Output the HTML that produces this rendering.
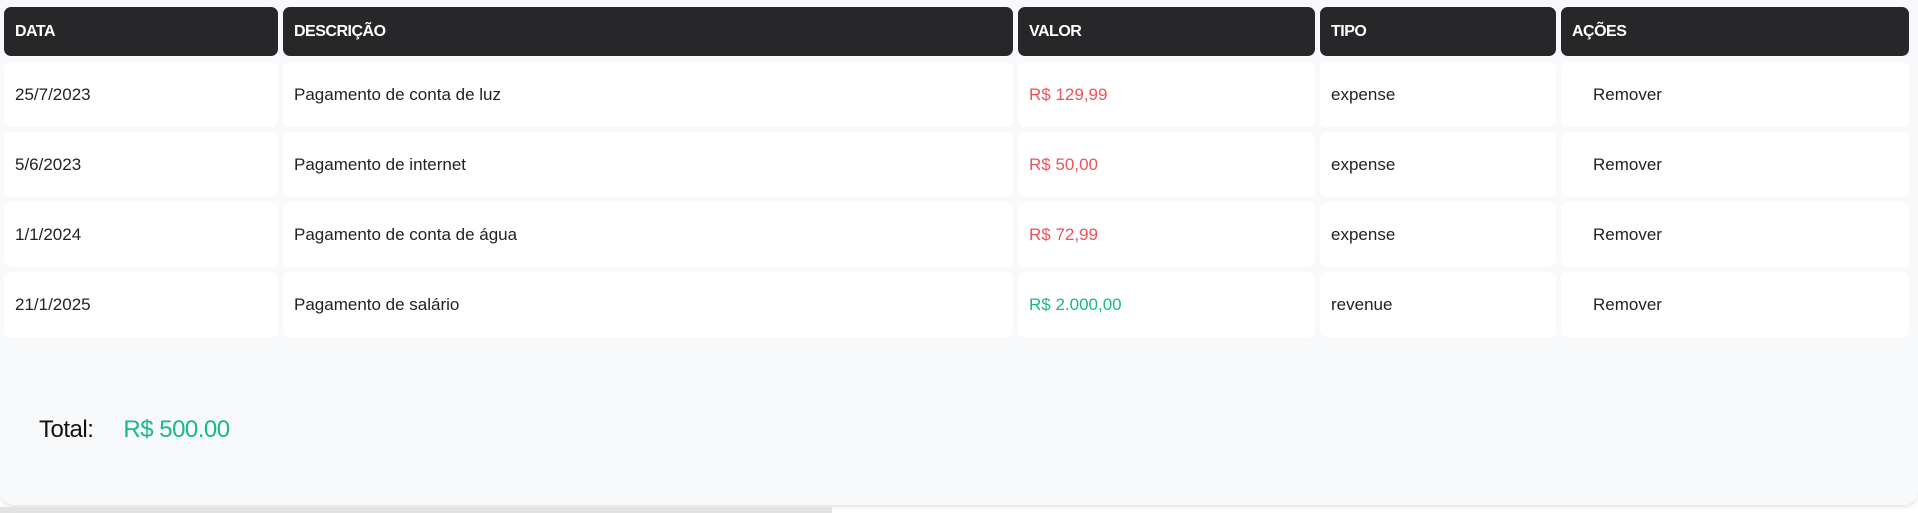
<!DOCTYPE html>
<html><head><meta charset="utf-8"><style>
*{margin:0;padding:0;box-sizing:border-box}
body{width:1918px;height:513px;background:#fff;font-family:"Liberation Sans",sans-serif;position:relative;overflow:hidden}
.wrap{position:absolute;left:0;top:0;width:1918px;height:505px;background:#f8f9fb;border-radius:0 0 14px 14px;box-shadow:0 2px 4px rgba(0,0,0,0.12)}
.c{position:absolute;border-radius:7px;background:#fff;font-size:17px;color:#222;padding-left:11px;display:flex;align-items:center}
.h{background:#27272a;color:#fff;font-weight:bold;font-size:16px;letter-spacing:-0.5px;height:49px;top:7px}
.r{color:#f0515a}.g{color:#19b889}
.tot{position:absolute;left:39px;top:416px;font-size:24px;color:#111;letter-spacing:-0.5px}
.tot span{color:#19b889;margin-left:30px}
.sb{position:absolute;left:0;top:507px;width:832px;height:6px;background:#e2e2e2}
</style></head><body>
<div class="wrap">
<div class="c h" style="left:4px;width:274px">DATA</div>
<div class="c h" style="left:283px;width:730px">DESCRIÇÃO</div>
<div class="c h" style="left:1018px;width:297px">VALOR</div>
<div class="c h" style="left:1320px;width:236px">TIPO</div>
<div class="c h" style="left:1561px;width:348px">AÇÕES</div>

<div class="c" style="left:4px;top:62px;width:274px;height:65px">25/7/2023</div>
<div class="c" style="left:283px;top:62px;width:730px;height:65px">Pagamento de conta de luz</div>
<div class="c r" style="left:1018px;top:62px;width:297px;height:65px">R$ 129,99</div>
<div class="c" style="left:1320px;top:62px;width:236px;height:65px">expense</div>
<div class="c" style="left:1561px;top:62px;width:348px;height:65px;padding-left:32px">Remover</div>

<div class="c" style="left:4px;top:132px;width:274px;height:65px">5/6/2023</div>
<div class="c" style="left:283px;top:132px;width:730px;height:65px">Pagamento de internet</div>
<div class="c r" style="left:1018px;top:132px;width:297px;height:65px">R$ 50,00</div>
<div class="c" style="left:1320px;top:132px;width:236px;height:65px">expense</div>
<div class="c" style="left:1561px;top:132px;width:348px;height:65px;padding-left:32px">Remover</div>

<div class="c" style="left:4px;top:202px;width:274px;height:65px">1/1/2024</div>
<div class="c" style="left:283px;top:202px;width:730px;height:65px">Pagamento de conta de água</div>
<div class="c r" style="left:1018px;top:202px;width:297px;height:65px">R$ 72,99</div>
<div class="c" style="left:1320px;top:202px;width:236px;height:65px">expense</div>
<div class="c" style="left:1561px;top:202px;width:348px;height:65px;padding-left:32px">Remover</div>

<div class="c" style="left:4px;top:272px;width:274px;height:65px">21/1/2025</div>
<div class="c" style="left:283px;top:272px;width:730px;height:65px">Pagamento de salário</div>
<div class="c g" style="left:1018px;top:272px;width:297px;height:65px">R$ 2.000,00</div>
<div class="c" style="left:1320px;top:272px;width:236px;height:65px">revenue</div>
<div class="c" style="left:1561px;top:272px;width:348px;height:65px;padding-left:32px">Remover</div>

<div class="tot">Total:<span>R$ 500.00</span></div>
</div>
<div class="sb"></div>
</body></html>
